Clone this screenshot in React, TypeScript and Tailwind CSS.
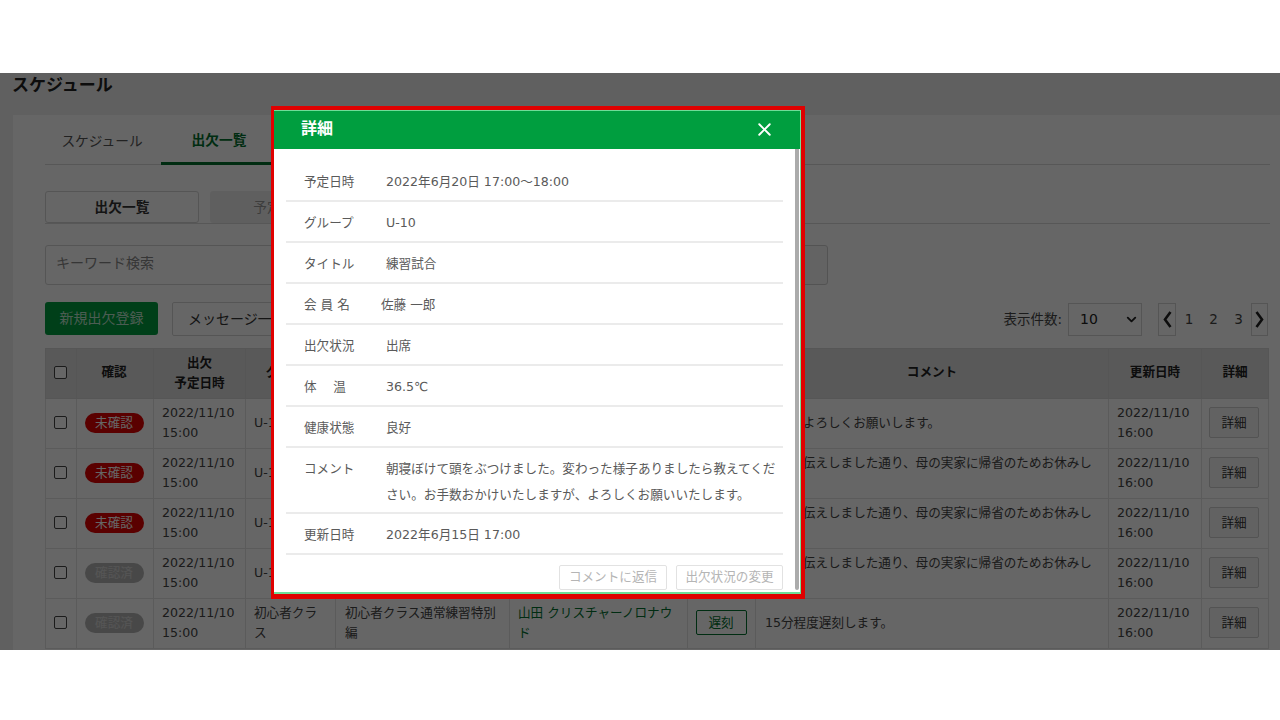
import React from 'react';
import { ChevronDown, X } from 'lucide-react';

const font = { fontFamily: '"DejaVu Sans", "Noto Sans CJK JP", sans-serif' };

const rows = [
  { status: '未確認', group: 'U-10', title: '練習試合', name: '佐藤 一郎', state: '出席', comment: '本日もよろしくお願いします。' },
  { status: '未確認', group: 'U-10', title: '練習試合', name: '佐藤 二郎', state: '欠席', comment: '前回お伝えしました通り、母の実家に帰省のためお休みします。' },
  { status: '未確認', group: 'U-10', title: '練習試合', name: '佐藤 三郎', state: '欠席', comment: '前回お伝えしました通り、母の実家に帰省のためお休みします。' },
  { status: '確認済', group: 'U-10', title: '練習試合', name: '佐藤 四郎', state: '欠席', comment: '前回お伝えしました通り、母の実家に帰省のためお休みします。' },
  { status: '確認済', group: '初心者クラス', title: '初心者クラス通常練習特別編', name: '山田 クリスチャーノロナウド', state: '遅刻', comment: '15分程度遅刻します。' },
];

const details = [
  { label: '予定日時', value: '2022年6月20日 17:00～18:00' },
  { label: 'グループ', value: 'U-10' },
  { label: 'タイトル', value: '練習試合' },
  { label: '会 員 名', value: '佐藤 一郎', tight: true },
  { label: '出欠状況', value: '出席' },
  { label: '体　 温', value: '36.5℃' },
  { label: '健康状態', value: '良好' },
  { label: 'コメント', value: '朝寝ぼけて頭をぶつけました。変わった様子ありましたら教えてください。お手数おかけいたしますが、よろしくお願いいたします。', long: true },
  { label: '更新日時', value: '2022年6月15日 17:00' },
];

const td = 'border border-[#e4e4e4] pb-[2px]';
const th = 'border border-[#d6d6d6] pb-[2px]';

function Check() {
  return <span className="block w-[13px] h-[13px] mx-auto rounded-[2px] border border-[#444] bg-white" />;
}

function PagerArrow({ flip }: { flip?: boolean }) {
  return (
    <svg width="9" height="17" viewBox="0 0 9 17" fill="none" stroke="#222" strokeWidth="2.6" className={flip ? 'rotate-180' : ''}>
      <path d="M7.5 1L2 8.5L7.5 16" />
    </svg>
  );
}

function DetailModal() {
  return (
    <div className="absolute left-[271px] top-[33px] w-[534px] h-[493px] border-t-[4px] border-r-[4px] border-b-[5px] border-l-[3px] border-[#e00000] bg-[#6fdc98] pt-px pr-px pb-[2px] flex flex-col">
      <div className="h-[38px] shrink-0 bg-[#009e3f] flex items-center justify-between pl-[27px] pr-[25px] pb-[2px]">
        <span className="text-[16px] font-bold text-white">詳細</span>
        <X className="w-[21px] h-[21px] text-white" strokeWidth={2.2} />
      </div>
      <div className="flex-1 bg-white flex min-h-0">
        <div className="flex-1 px-[12px] pt-[12px]">
          {details.map((d) => (
            <div
              key={d.label}
              className={`flex border-b-2 border-[#ebebeb] pl-[18px] text-[12.6px] text-[#5a5a5a] ${d.long ? 'h-[66px] pt-[8px] leading-[26px]' : 'h-[41px] items-center pt-[4px]'}`}
            >
              <span className={`shrink-0 ${d.tight ? 'w-[77px]' : 'w-[82px]'}`}>{d.label}</span>
              <span>{d.value}</span>
            </div>
          ))}
          <div className="flex justify-end gap-[9px] pt-[10px]">
            <button className="w-[108px] h-[25px] rounded-[2px] border border-[#e2e2e2] text-[12.6px] text-[#b5b5b5]">コメントに返信</button>
            <button className="w-[107px] h-[25px] rounded-[2px] border border-[#e2e2e2] text-[12.6px] text-[#b5b5b5]">出欠状況の変更</button>
          </div>
        </div>
        <div className="w-[4px] shrink-0 mr-px mb-[2px] bg-[#ababab] rounded-b-[2px]" />
      </div>
    </div>
  );
}

export default function App() {
  return (
    <div className="w-[1280px] h-[720px] bg-white overflow-hidden flex flex-col" style={font}>
      <div className="h-[73px] shrink-0" />
      <div className="relative h-[577px] shrink-0 overflow-hidden bg-[#f0f0f0] pl-[13px]">
        <div className="h-[26px] mb-[16px] -ml-px flex items-center text-[17px] font-bold text-[#222]">スケジュール</div>
        <div className="bg-white pl-[32px] w-[1267px] h-[535px]">
          <div className="w-[1225px] flex h-[50px] border-b border-[#d9d9d9] text-[13.7px]">
            <div className="w-[116px] flex items-center justify-center pt-[3px] pr-[2px] text-[#555]">スケジュール</div>
            <div className="w-[111px] -mb-px flex items-center justify-center pt-[3px] pl-[5px] border-b-[3px] border-[#006f2c] font-bold text-[#00702d]">出欠一覧</div>
          </div>
          <div className="w-[1225px] flex gap-[11px] mt-[26px] text-[13.7px] border-b border-[#d9d9d9]">
            <div className="w-[154px] h-[32px] flex items-center justify-center rounded-[3px] border border-[#d5d5d5] font-bold text-[#333]">出欠一覧</div>
            <div className="w-[155px] h-[32px] flex items-center justify-center rounded-[3px] bg-[#eeeeee] text-[#999]">予定別一覧</div>
          </div>
          <div className="flex mt-[21px] w-[783px]">
            <div className="flex-1 h-[40px] flex items-center pl-[10px] pb-[3px] rounded-l-[3px] border border-[#d5d5d5] text-[14px] text-[#888]">キーワード検索</div>
            <div className="w-[120px] h-[40px] rounded-r-[3px] border border-[#d0d0d0] bg-[#f8f8f8]" />
          </div>
          <div className="w-[1223px] h-[34px] flex mt-[17px]">
            <div className="w-[113px] h-[33px] flex items-center justify-center pb-px rounded-[3px] bg-[#009e3f] text-[14px] text-[#bfe6cf]">新規出欠登録</div>
            <div className="ml-[14px] w-[130px] h-[34px] flex items-center pl-[15px] rounded-[2px] border border-[#d5d5d5] text-[14px] text-[#333]">メッセージ一括</div>
            <div className="ml-auto mt-px flex items-center text-[13.5px] text-[#444]">
              <span className="mr-[6px]">表示件数:</span>
              <div className="w-[74px] h-[33px] flex items-center justify-between pl-[11px] pr-[2px] border border-[#d5d5d5] text-[14px] text-[#222]">
                10
                <ChevronDown className="w-[15px] h-[15px]" strokeWidth={3} />
              </div>
              <div className="ml-[16px] w-[18px] h-[33px] flex items-center justify-center border border-[#d5d5d5]">
                <PagerArrow />
              </div>
              <span className="w-[25px] pl-px text-center">1</span>
              <span className="w-[25px] text-center">2</span>
              <span className="w-[25px] text-center">3</span>
              <div className="w-[17px] h-[33px] flex items-center justify-center border border-[#d5d5d5]">
                <PagerArrow flip />
              </div>
            </div>
          </div>
          <table className="w-[1223px] mt-[12px] table-fixed border-collapse text-[12.6px] text-[#444]">
            <colgroup>
              <col className="w-[31px]" />
              <col className="w-[77px]" />
              <col className="w-[92px]" />
              <col className="w-[90px]" />
              <col className="w-[174px]" />
              <col className="w-[178px]" />
              <col className="w-[68px]" />
              <col className="w-[353px]" />
              <col className="w-[93px]" />
              <col className="w-[67px]" />
            </colgroup>
            <thead>
              <tr className="h-[50px] bg-[#dedede] text-[#222] font-bold">
                <th className={`${th} pr-[2px]`}><Check /></th>
                <th className={`${th} pr-[2px]`}>確認</th>
                <th className={`${th} leading-[20px]`}>出欠<br />予定日時</th>
                <th className={th}>グループ</th>
                <th className={th}>タイトル</th>
                <th className={th}>会員名</th>
                <th className={th}>出欠</th>
                <th className={th}>コメント</th>
                <th className={th}>更新日時</th>
                <th className={th}>詳細</th>
              </tr>
            </thead>
            <tbody>
              {rows.map((r, i) => (
                <tr key={i} className="h-[50px] leading-[20px]">
                  <td className={`${td} pr-[2px]`}><Check /></td>
                  <td className={`${td} pr-[2px] text-center`}>
                    <span className={`inline-block w-[59px] h-[20px] leading-[20px] rounded-full ${r.status === '未確認' ? 'bg-[#e00000] text-white' : 'bg-[#b5b5b5] text-[#d5d5d5]'}`}>{r.status}</span>
                  </td>
                  <td className={`${td} pl-[8px]`}>2022/11/10<br />15:00</td>
                  <td className={`${td} pl-[8px] pr-[12px]`}>{r.group}</td>
                  <td className={`${td} pl-[9px] pr-[8px]`}>{r.title}</td>
                  <td className={`${td} pl-[8px] pr-[9px] text-[#00702d]`}>{r.name}</td>
                  <td className={`${td} pr-[1px] text-center`}>
                    <span className="inline-block w-[51px] h-[25px] leading-[23px] rounded-[2px] border border-[#00702d] text-[#00702d]">{r.state}</span>
                  </td>
                  <td className={`${td} pl-[9px] pr-[14px]`}>{r.comment}</td>
                  <td className={`${td} pl-[8px]`}>2022/11/10<br />16:00</td>
                  <td className={`${td} pr-[2px] text-center`}>
                    <span className="inline-block w-[50px] h-[31px] leading-[29px] rounded-[2px] border border-[#cfcfcf] bg-[#f5f5f5] text-[#333]">詳細</span>
                  </td>
                </tr>
              ))}
            </tbody>
          </table>
        </div>
        <div className="absolute inset-0 bg-black/60" />
        <DetailModal />
      </div>
      <div className="flex-1" />
    </div>
  );
}
